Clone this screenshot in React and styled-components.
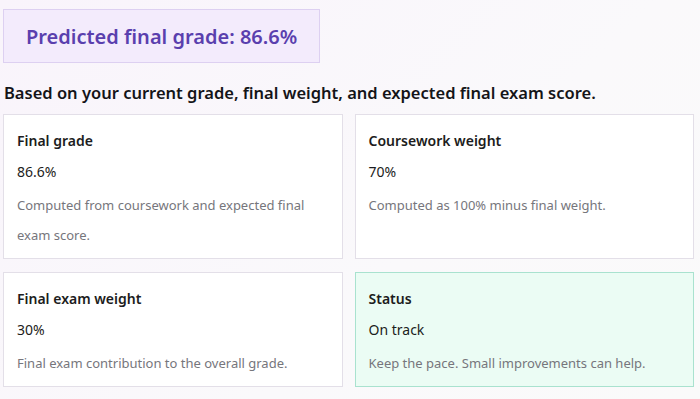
import React from 'react'
import styled, { createGlobalStyle } from 'styled-components'

const GlobalStyle = createGlobalStyle`
  html, body {
    margin: 0;
    padding: 0;
    background: linear-gradient(135deg, #f9f4fb 0%, #faf9fb 60%, #fafafa 100%);
    font-family: "Segoe UI", "Noto Sans", "Open Sans", sans-serif;
    color: #1f1f24;
  }
`

const Page = styled.div`
  padding: 9px 6px 12px 3px;
`

const Banner = styled.div`
  display: inline-flex;
  align-items: center;
  height: 52px;
  padding: 0 22px;
  background: #f3ebfc;
  border: 1px solid #ddd0f1;
  color: #5a3fae;
  font-size: 20px;
  font-weight: 600;
`

const Lead = styled.h2`
  margin: 19px 0 10px 1px;
  font-size: 16.5px;
  font-weight: 600;
  line-height: 22px;
  color: #141418;
`

const Grid = styled.div`
  display: grid;
  grid-template-columns: 1fr 1fr;
  column-gap: 12px;
  row-gap: 13px;
`

const Card = styled.div`
  padding: 16px 13px 8px;
  background: ${p => (p.$ok ? '#ebfcf4' : '#ffffff')};
  border: 1px solid ${p => (p.$ok ? '#a9e2cf' : '#e3dfe8')};
`

const Title = styled.div`
  font-size: 14px;
  font-weight: 600;
  line-height: 20px;
  margin-bottom: 11px;
  color: #1c1c20;
`

const Value = styled.div`
  font-size: 14px;
  line-height: 20px;
  margin-bottom: 8px;
  color: #1c1c20;
`

const Desc = styled.div`
  font-size: 13px;
  line-height: 30px;
  color: #76767c;
`

const cards = [
  { title: 'Final grade', value: '86.6%', desc: 'Computed from coursework and expected final exam score.' },
  { title: 'Coursework weight', value: '70%', desc: 'Computed as 100% minus final weight.' },
  { title: 'Final exam weight', value: '30%', desc: 'Final exam contribution to the overall grade.' },
  { title: 'Status', value: 'On track', desc: 'Keep the pace. Small improvements can help.', ok: true },
]

export default function App() {
  return (
    <Page>
      <GlobalStyle />
      <Banner>Predicted final grade: 86.6%</Banner>
      <Lead>Based on your current grade, final weight, and expected final exam score.</Lead>
      <Grid>
        {cards.map(c => (
          <Card key={c.title} $ok={c.ok}>
            <Title>{c.title}</Title>
            <Value>{c.value}</Value>
            <Desc>{c.desc}</Desc>
          </Card>
        ))}
      </Grid>
    </Page>
  )
}
